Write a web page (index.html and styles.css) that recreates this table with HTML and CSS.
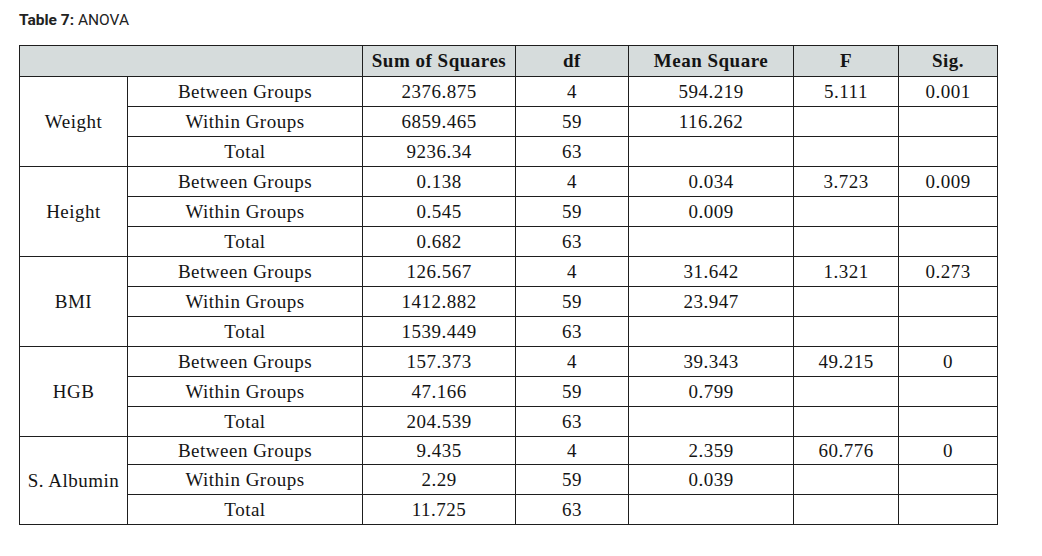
FILE: index.html
```html
<!DOCTYPE html>
<html lang="en">
<head>
<meta charset="utf-8">
<title>Table 7: ANOVA</title>
<link rel="stylesheet" href="styles.css">
</head>
<body>
<div class="page">
  <p class="caption"><b>Table 7:</b> ANOVA</p>
  <table class="anova">
    <colgroup>
      <col class="c1"><col class="c2"><col class="c3"><col class="c4"><col class="c5"><col class="c6"><col class="c7">
    </colgroup>
    <thead>
      <tr class="head">
        <th colspan="2"></th>
        <th>Sum of Squares</th>
        <th>df</th>
        <th>Mean Square</th>
        <th>F</th>
        <th>Sig.</th>
      </tr>
    </thead>
    <tbody>
      <tr><td rowspan="3">Weight</td><td>Between Groups</td><td>2376.875</td><td>4</td><td>594.219</td><td>5.111</td><td>0.001</td></tr>
      <tr><td>Within Groups</td><td>6859.465</td><td>59</td><td>116.262</td><td></td><td></td></tr>
      <tr><td>Total</td><td>9236.34</td><td>63</td><td></td><td></td><td></td></tr>
      <tr><td rowspan="3">Height</td><td>Between Groups</td><td>0.138</td><td>4</td><td>0.034</td><td>3.723</td><td>0.009</td></tr>
      <tr><td>Within Groups</td><td>0.545</td><td>59</td><td>0.009</td><td></td><td></td></tr>
      <tr><td>Total</td><td>0.682</td><td>63</td><td></td><td></td><td></td></tr>
      <tr><td rowspan="3">BMI</td><td>Between Groups</td><td>126.567</td><td>4</td><td>31.642</td><td>1.321</td><td>0.273</td></tr>
      <tr><td>Within Groups</td><td>1412.882</td><td>59</td><td>23.947</td><td></td><td></td></tr>
      <tr><td>Total</td><td>1539.449</td><td>63</td><td></td><td></td><td></td></tr>
      <tr><td rowspan="3">HGB</td><td>Between Groups</td><td>157.373</td><td>4</td><td>39.343</td><td>49.215</td><td>0</td></tr>
      <tr><td>Within Groups</td><td>47.166</td><td>59</td><td>0.799</td><td></td><td></td></tr>
      <tr><td>Total</td><td>204.539</td><td>63</td><td></td><td></td><td></td></tr>
      <tr class="short"><td rowspan="3">S. Albumin</td><td>Between Groups</td><td>9.435</td><td>4</td><td>2.359</td><td>60.776</td><td>0</td></tr>
      <tr><td>Within Groups</td><td>2.29</td><td>59</td><td>0.039</td><td></td><td></td></tr>
      <tr><td>Total</td><td>11.725</td><td>63</td><td></td><td></td><td></td></tr>
    </tbody>
  </table>
</div>
</body>
</html>
```
FILE: styles.css
```css
html, body {
  margin: 0;
  padding: 0;
  background: #ffffff;
}

.page {
  padding: 12px 0 0 19px;
}

.caption {
  margin: 0 0 17px 0;
  font-family: Roboto, "Liberation Sans", sans-serif;
  font-size: 15.5px;
  line-height: 16px;
  color: #222222;
}

.caption b {
  font-weight: 700;
}

.anova {
  border-collapse: collapse;
  table-layout: fixed;
  width: 979px;
  font-family: "Liberation Serif", "DejaVu Serif", serif;
  font-size: 19px;
  letter-spacing: 0.5px;
  color: #141414;
}

.c1 { width: 108px; }
.c2 { width: 235px; }
.c3 { width: 153px; }
.c4 { width: 113px; }
.c5 { width: 165px; }
.c6 { width: 105px; }
.c7 { width: 99px; }

.anova th,
.anova td {
  border: 1px solid #1e1e1e;
  padding: 0;
  text-align: center;
  vertical-align: middle;
  line-height: 20px;
}

.anova td {
  height: 29px;
}

.anova .head th {
  height: 30px;
  background: #d6dcdc;
  font-weight: 700;
}

.anova .short td {
  height: 27px;
}
```
